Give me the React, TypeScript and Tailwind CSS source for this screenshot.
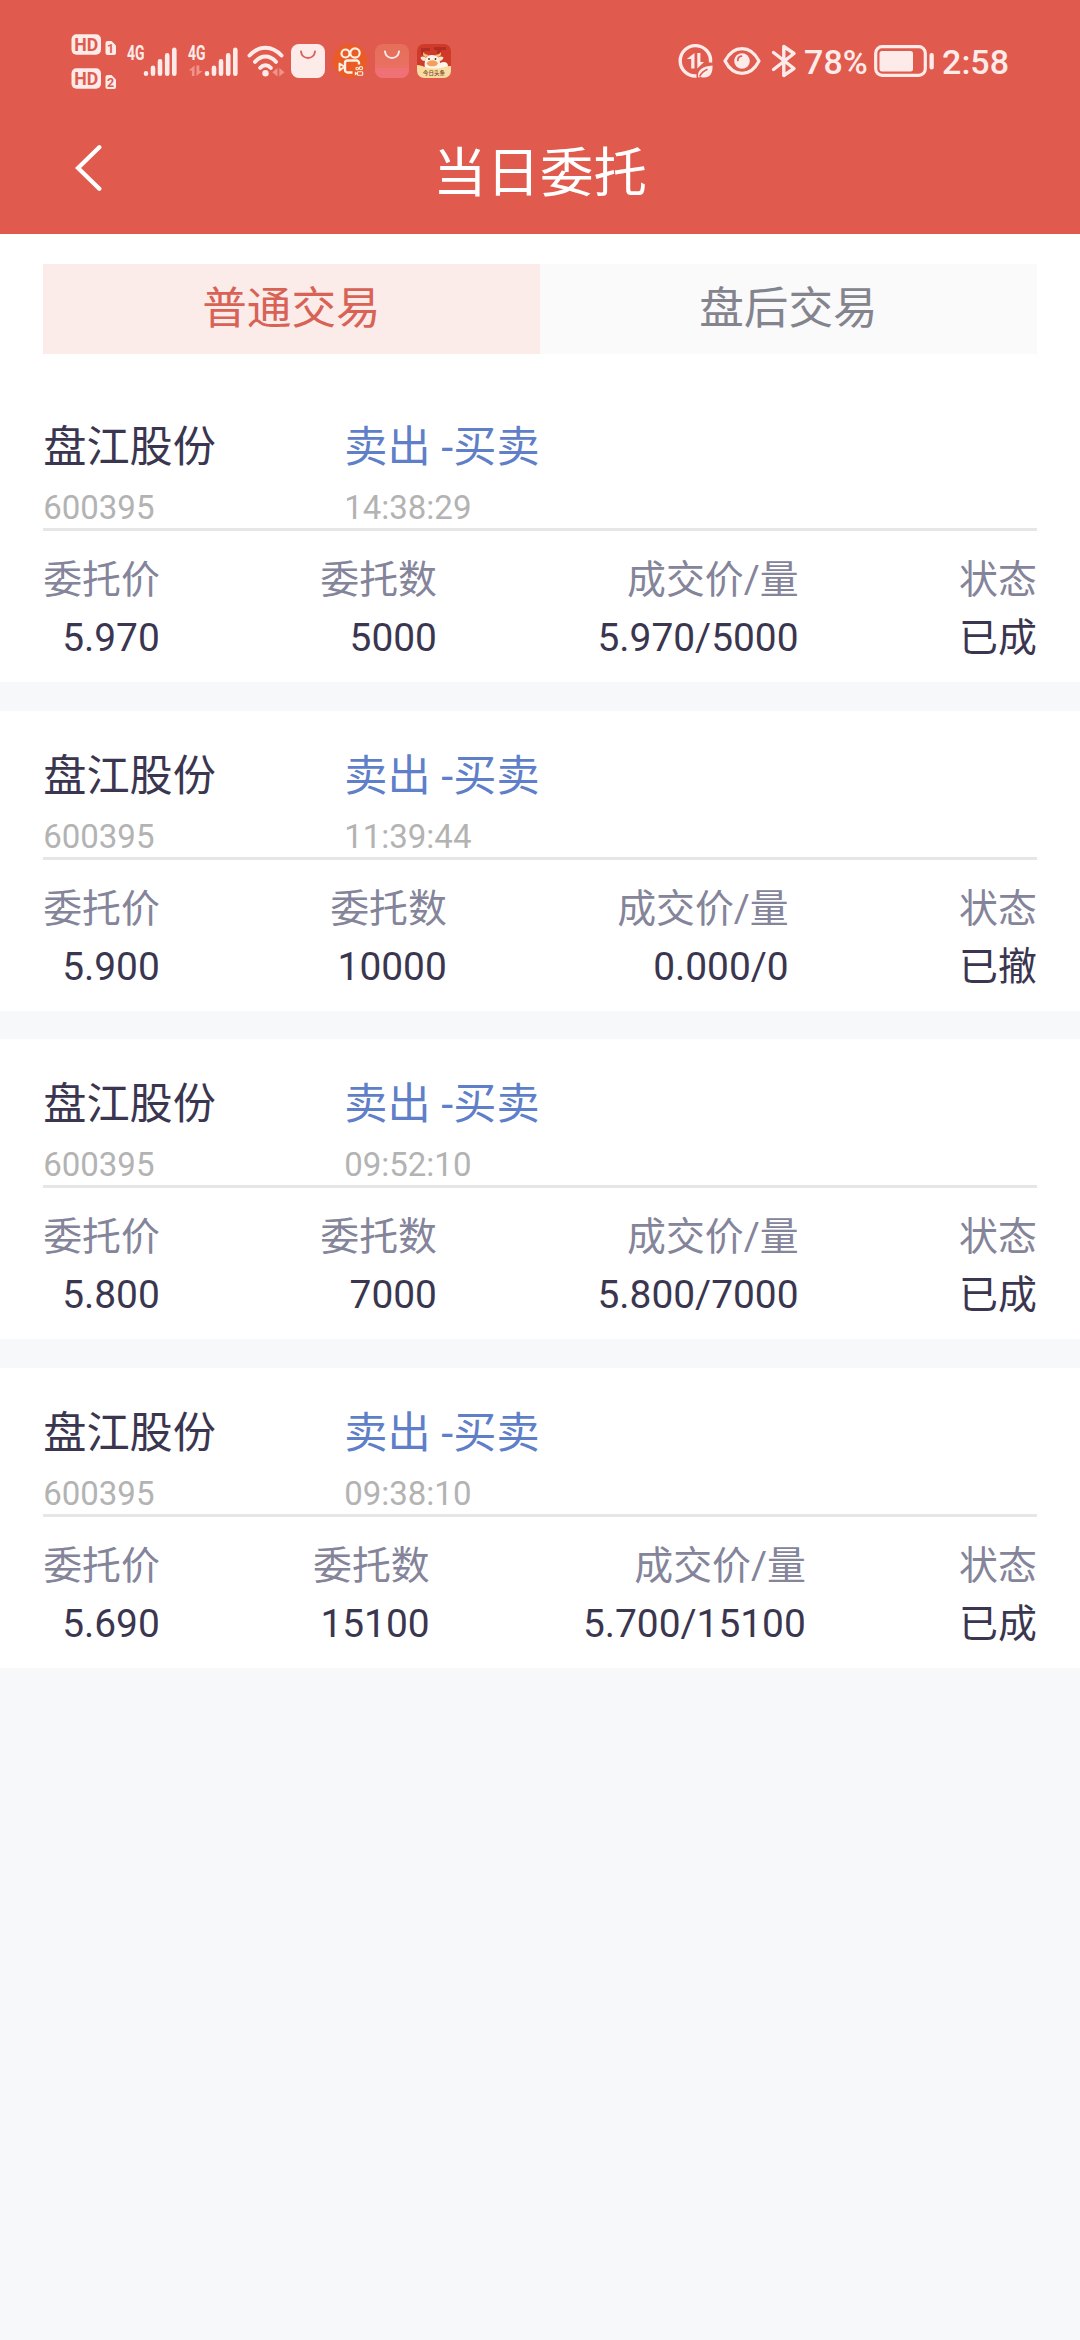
import clsx from 'clsx';

type Order = {
  name: string;
  code: string;
  side: string;
  time: string;
  price: string;
  amount: string;
  deal: string;
  status: string;
};

const orders: Order[] = [
  { name: '盘江股份', code: '600395', side: '卖出 -买卖', time: '14:38:29', price: '5.970', amount: '5000', deal: '5.970/5000', status: '已成' },
  { name: '盘江股份', code: '600395', side: '卖出 -买卖', time: '11:39:44', price: '5.900', amount: '10000', deal: '0.000/0', status: '已撤' },
  { name: '盘江股份', code: '600395', side: '卖出 -买卖', time: '09:52:10', price: '5.800', amount: '7000', deal: '5.800/7000', status: '已成' },
  { name: '盘江股份', code: '600395', side: '卖出 -买卖', time: '09:38:10', price: '5.690', amount: '15100', deal: '5.700/15100', status: '已成' },
];

const tabs = ['普通交易', '盘后交易'];

function HdIcon({ sim }: { sim: string }) {
  return (
    <svg width="46" height="21" viewBox="0 0 46 21" className="overflow-visible">
      <rect x="0.5" y="0.3" width="29.5" height="20.4" rx="5" fill="#fdebe9" />
      <text x="15.2" y="16.6" fontSize="17.5" fontWeight="700" textAnchor="middle" textLength="24" lengthAdjust="spacingAndGlyphs" fill="#e05a4d">HD</text>
      <path d="M36.500 7H40.500l4.500 4.500V19a2 2 0 0 1-2 2h-6.500a2 2 0 0 1-2-2V9a2 2 0 0 1 2-2Z" fill="#fdebe9" />
      <text x="39.7" y="18.800" fontSize="12.5" fontWeight="700" textAnchor="middle" fill="#e05a4d">{sim}</text>
    </svg>
  );
}

function SignalIcon({ data }: { data?: boolean }) {
  return (
    <svg width="52" height="34" viewBox="0 0 52 34" className="overflow-visible">
      <text x="0" y="16" fontSize="19.5" fontWeight="700" textLength="17.5" lengthAdjust="spacingAndGlyphs" fill="#fdebe9">4G</text>
      <path d="M19 29.700v0.300M26 24.200v5.800M33 17.700v12.300M40.200 11.700v18.300M47.300 6.200v23.800" transform="translate(0 -.3)" stroke="#fdebe9" strokeWidth="4.6" strokeLinecap="round" />
      {data && <path d="M6.500 21.500v10.500h-2.600v-5.500H0.700zM8.500 21.500v10.500l6-5h-3.200v-5.500z" fill="#f0948b" />}
    </svg>
  );
}

function WifiIcon() {
  return (
    <svg width="38" height="34" viewBox="0 0 38 34" fill="none">
      <path d="M2.500 11.500C12 1 25 1 34.500 11.500M8 17.800c6.500-7 14.500-7 21 0M13.200 23.800c3.200-3.300 7.400-3.300 10.600 0" stroke="#fdebe9" strokeWidth="4" strokeLinecap="round" />
      <circle cx="18.500" cy="29.300" r="3.200" fill="#fdebe9" />
      <path d="M30.500 24v8.500l-5.200-4.200zM32.300 24v8.500l5.200-4.200z" fill="#f0948b" />
    </svg>
  );
}

function BagIcon({ tinted }: { tinted?: boolean }) {
  return (
    <svg width="34" height="34" viewBox="0 0 34 34" fill="none">
      <defs>
        <linearGradient id="bagTint" x1="0" y1="0" x2="0" y2="1">
          <stop offset="0" stopColor="#e56f58" />
          <stop offset="1" stopColor="#ec7068" />
        </linearGradient>
      </defs>
      <rect width="34" height="34" rx="8" fill={tinted ? 'url(#bagTint)' : '#fdebe9'} />
      {tinted && <path d="M0 24h34v2a8 8 0 0 1-8 8H8a8 8 0 0 1-8-8z" fill="#f0727a" opacity=".8" />}
      <path d="M10 7.500c.8 8.500 13.200 8.500 14 0" stroke={tinted ? '#fdebe9' : '#d9635a'} strokeWidth="2" strokeLinecap="round" />
    </svg>
  );
}

function KuaishouIcon() {
  return (
    <svg width="34" height="34" viewBox="0 0 34 34" fill="none" stroke="#fdf0e4">
      <circle cx="17" cy="17" r="17" fill="#ea5b26" stroke="none" />
      <circle cx="12.500" cy="9.500" r="4" strokeWidth="2.200" />
      <circle cx="22" cy="9" r="4.700" strokeWidth="2.200" />
      <path d="M26 20.500v-1.500a2.500 2.500 0 0 0-2.500-2.500H14.500a2.500 2.500 0 0 0-2.500 2.500v7a2.500 2.500 0 0 0 2.500 2.500H19.500" strokeWidth="2.400" />
      <path d="M11.500 22.800 6.500 19.500v7z" strokeWidth="1.900" strokeLinejoin="round" />
      <g strokeWidth="1.100">
        <circle cx="24.200" cy="24.500" r="1.300" />
        <circle cx="28" cy="24.200" r="1.600" />
        <rect x="24.500" y="27.800" width="5.200" height="3.400" rx=".8" />
        <path d="m24 29.500-1.600-1v2z" />
      </g>
    </svg>
  );
}

function OxIcon() {
  return (
    <svg width="34" height="34" viewBox="0 0 34 34" fill="none" className="overflow-visible">
      <defs>
        <clipPath id="oxClip">
          <rect width="34" height="34" rx="7" />
        </clipPath>
      </defs>
      <g clipPath="url(#oxClip)">
        <rect width="34" height="34" fill="#cf3a2b" />
        <path d="M4 4h9v3H7v4H4zM17 3h12v3h-5v4h-4V6h-3z" fill="#b32d23" />
        <path d="M9 13c-3-.5-3.500-3-2.500-5 .8 2.300 3 3 5.500 3zM21 13c3-.5 3.500-3 2.500-5-.8 2.300-3 3-5.500 3z" fill="#f6c46a" />
        <path d="M3.500 13.500c2-1.500 4-1 6 .5l-2 3c-2 0-3.500-1.500-4-3.500zM26.500 13.500c-2-1.500-4-1-6 .5l2 3c2 0 3.500-1.500 4-3.500z" fill="#fbe6cf" />
        <path d="M8 25c-1-8 0-14 7-14s8 5 8 8c4-2 8-1 8 3 0 3-3 4-6 4z" fill="#fdf3e6" />
        <ellipse cx="15.300" cy="19.300" rx="5.500" ry="3" fill="#f3a05d" />
        <circle cx="12" cy="15" r=".9" fill="#5b2a20" />
        <circle cx="18.500" cy="15" r=".9" fill="#5b2a20" />
        <path d="M0 21c5 0 8 3.500 17 3.500S29 22 34 22v12H0z" fill="#f8dca2" />
        <text x="17" y="31" fontSize="5.500" fontWeight="500" textAnchor="middle" fill="#7c4326">今日头条</text>
      </g>
    </svg>
  );
}

function DataSaverIcon() {
  return (
    <svg width="36" height="36" viewBox="0 0 36 36" fill="none">
      <path d="M32.500 19.500A15.200 15.200 0 1 0 18.500 33" stroke="#fdebe9" strokeWidth="3.400" />
      <path d="M16.500 10v15.500h-3.300v-9.500H8.800zM19.300 10v15.500l6.700-6.500h-3.600v-9z" fill="#fdebe9" />
      <path d="M34.500 22.500c.5 8.500-3 12.500-9 12-1.300 0-2.500-.4-3.200-.8l-1.300 1.100-1-1c-.5-7.500 5-10.500 14.500-11.300z" fill="#fdebe9" />
      <path d="M21.500 33.500c2-3.800 4.500-5.800 8-7.300" stroke="#e05a4d" strokeWidth="1.500" />
    </svg>
  );
}

function EyeIcon() {
  return (
    <svg width="38" height="30" viewBox="0 0 38 30" fill="none">
      <path d="M2 15C10.500-1.500 27.500-1.500 36 15 27.500 31.500 10.500 31.500 2 15Z" stroke="#fdebe9" strokeWidth="3.200" strokeLinejoin="round" />
      <circle cx="19" cy="15" r="7.800" fill="#fdebe9" />
      <path d="M14.800 14.500c0-2.500 1.500-4 3.700-4.300" stroke="#e05a4d" strokeWidth="1.700" strokeLinecap="round" />
    </svg>
  );
}

function BluetoothIcon() {
  return (
    <svg width="26" height="34" viewBox="0 0 26 34" fill="none">
      <path d="M2.500 8.500 23 24.500l-10.200 7V2.500L23 9.500 2.500 25.500" stroke="#fdebe9" strokeWidth="3.400" strokeLinecap="round" strokeLinejoin="round" />
    </svg>
  );
}

function BatteryIcon() {
  return (
    <svg width="60" height="32" viewBox="0 0 60 32" fill="none">
      <rect x="1.700" y="1.700" width="49.600" height="28.600" rx="6.500" stroke="#fdebe9" strokeWidth="3.200" />
      <rect x="5.500" y="6" width="33.500" height="20.500" rx="2.500" fill="#fdebe9" />
      <rect x="55.500" y="8" width="4.300" height="16.500" rx="2" fill="#fdebe9" />
    </svg>
  );
}

function StatusBar() {
  return (
    <div className="flex h-[122px] items-center justify-between px-[71px] text-[#fdebe9]">
      <div className="flex items-center">
        <div className="flex w-14 flex-col gap-[13px] pt-px">
          <HdIcon sim="1" />
          <HdIcon sim="2" />
        </div>
        <SignalIcon />
        <div className="ml-[9px]">
          <SignalIcon data />
        </div>
        <div className="ml-[7px] flex items-center">
          <WifiIcon />
          <div className="ml-[6px] flex gap-2">
            <BagIcon />
            <KuaishouIcon />
            <BagIcon tinted />
            <OxIcon />
          </div>
        </div>
      </div>
      <div className="flex items-center text-[34px] leading-none font-medium">
        <DataSaverIcon />
        <div className="ml-[9px]">
          <EyeIcon />
        </div>
        <div className="ml-[10px]">
          <BluetoothIcon />
        </div>
        <span className="ml-[7px] w-[63px] pt-[2px]">78%</span>
        <div className="ml-[7px]">
          <BatteryIcon />
        </div>
        <span className="ml-[8px] pt-[2px]">2:58</span>
      </div>
    </div>
  );
}

function Column({ label, value }: { label: string; value: string }) {
  return (
    <div className="text-right text-[38.88px] leading-[58px]">
      <div className="text-[#84849a]">{label}</div>
      <div className="text-[#3b3650]">{value}</div>
    </div>
  );
}

function OrderCard({ order }: { order: Order }) {
  return (
    <div className="h-[300px] bg-white px-[43.2px] pt-[37px]">
      <div className="flex h-28 border-b-3 border-[#e6e6e6]">
        <div className="w-[301px]">
          <div className="text-[43.2px] leading-[57px] text-[#3b3650]">{order.name}</div>
          <div className="mt-3 text-[33px] leading-10 text-[#b3b3b3]">{order.code}</div>
        </div>
        <div>
          <div className="text-[43.2px] leading-[57px] text-[#5f7fc8]">{order.side}</div>
          <div className="mt-3 text-[33px] leading-10 text-[#b3b3b3]">{order.time}</div>
        </div>
      </div>
      <div className="flex justify-between pt-5">
        <Column label="委托价" value={order.price} />
        <Column label="委托数" value={order.amount} />
        <Column label="成交价/量" value={order.deal} />
        <Column label="状态" value={order.status} />
      </div>
    </div>
  );
}

export default function App() {
  return (
    <div className="min-h-[2340px] w-[1080px] bg-[#f7f8fa] font-['Roboto','Noto_Sans_CJK_SC',sans-serif]">
      {/* Header */}
      <header className="h-[234px] bg-[#e05a4d]">
        <StatusBar />
        <div className="flex h-[98px] items-center px-[75px]">
          <svg width="27" height="48" viewBox="0 0 27 48" fill="none" className="mb-[6px]">
            <path d="M24.300 3.200 3 24 24.300 44.800" stroke="#fff" strokeWidth="4.300" strokeLinecap="round" />
          </svg>
          <h1 className="mr-[27px] flex-1 pt-[5px] text-center text-[53.5px] leading-[80px] text-white">当日委托</h1>
        </div>
      </header>

      {/* Tabs */}
      <div className="h-[148px] bg-white px-[43px] pt-[30px]">
        <div className="grid h-[90px] grid-cols-2">
          {tabs.map((tab, i) => (
            <button
              key={tab}
              className={clsx(
                'text-center text-[44.64px] leading-[86px]',
                i === 0 ? 'bg-[#fbecea] text-[#d86255]' : 'bg-[#fafafa] text-[#84848f]',
              )}
            >
              {tab}
            </button>
          ))}
        </div>
      </div>

      {/* Orders */}
      <div className="flex flex-col gap-[28.67px]">
        {orders.map((order) => (
          <OrderCard key={order.time} order={order} />
        ))}
      </div>
    </div>
  );
}
